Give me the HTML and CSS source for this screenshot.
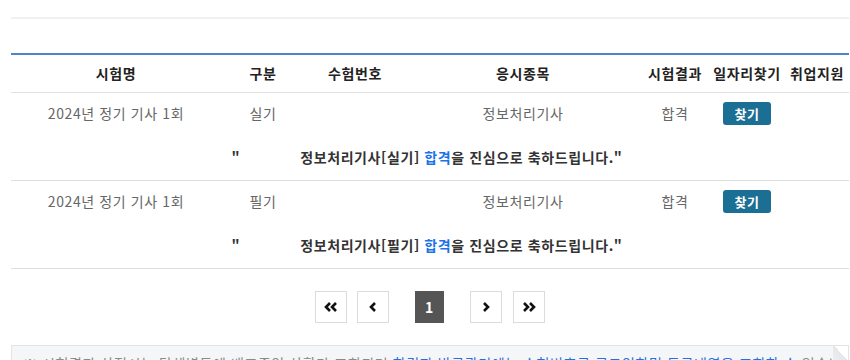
FILE: index.html
```html
<!DOCTYPE html>
<html lang="ko">
<head>
    <meta charset="UTF-8">
    <meta name="viewport" content="width=device-width, initial-scale=1.0">
    <title>합격자 발표 조회</title>
    <link rel="stylesheet" href="styles.css">
</head>
<body>

<div class="wrap">
    <!-- 상단 구분선 -->
    <div class="top-line"></div>

    <!-- 합격자 조회 결과 -->
    <table class="result-table">
        <colgroup>
            <col class="c-name">
            <col class="c-type">
            <col class="c-no">
            <col class="c-subject">
            <col class="c-result">
            <col class="c-job">
            <col class="c-support">
        </colgroup>
        <thead>
            <tr>
                <th>시험명</th>
                <th>구분</th>
                <th>수험번호</th>
                <th>응시종목</th>
                <th>시험결과</th>
                <th>일자리찾기</th>
                <th>취업지원</th>
            </tr>
        </thead>
        <tbody>
            <tr class="data-row">
                <td>2024년 정기 기사 1회</td>
                <td>실기</td>
                <td></td>
                <td>정보처리기사</td>
                <td>합격</td>
                <td><button class="btn-find">찾기</button></td>
                <td></td>
            </tr>
            <tr class="msg-row">
                <td colspan="7">
                    <span class="msg"><span class="q">"</span>정보처리기사[실기] <em>합격</em>을 진심으로 축하드립니다."</span>
                </td>
            </tr>
            <tr class="data-row">
                <td>2024년 정기 기사 1회</td>
                <td>필기</td>
                <td></td>
                <td>정보처리기사</td>
                <td>합격</td>
                <td><button class="btn-find">찾기</button></td>
                <td></td>
            </tr>
            <tr class="msg-row">
                <td colspan="7">
                    <span class="msg"><span class="q">"</span>정보처리기사[필기] <em>합격</em>을 진심으로 축하드립니다."</span>
                </td>
            </tr>
        </tbody>
    </table>

    <!-- 페이지 이동 -->
    <div class="paging">
        <a class="pg first" href="#"><svg width="14" height="10" viewBox="0 0 14 10"><polyline points="6,1 2,5 6,9" /><polyline points="12,1 8,5 12,9" /></svg></a>
        <a class="pg prev" href="#"><svg width="8" height="10" viewBox="0 0 8 10"><polyline points="6,1 2,5 6,9" /></svg></a>
        <a class="pg num on" href="#">1</a>
        <a class="pg next" href="#"><svg width="8" height="10" viewBox="0 0 8 10"><polyline points="2,1 6,5 2,9" /></svg></a>
        <a class="pg last" href="#"><svg width="14" height="10" viewBox="0 0 14 10"><polyline points="2,1 6,5 2,9" /><polyline points="8,1 12,5 8,9" /></svg></a>
    </div>

    <!-- 안내 문구 -->
    <div class="notice">
        <p>※ 시험결과 산정시는 단체별도에 배포중인 상황만 조회되며 <span class="blue">합격자 발급관리에는 수험번호로 로그인하면 등록내역을 조회할 수</span> 있습니다.</p>
    </div>
</div>

</body>
</html>
```

FILE: styles.css
```css
* {
    margin: 0;
    padding: 0;
    box-sizing: border-box;
}

body {
    font-family: "Noto Sans CJK KR", "Noto Sans", sans-serif;
    font-size: 14px;
    letter-spacing: 0.6px;
    color: #333;
    background: #fff;
    overflow: hidden;
}

.wrap {
    width: 838px;
    margin-left: 11px;
    padding-top: 17px;
}

.top-line {
    height: 2px;
    background-color: #f1f1f1;
    margin-bottom: 34px;
}

.result-table {
    width: 100%;
    table-layout: fixed;
    border-collapse: collapse;
    border-top: 2px solid #4a86c8;
}

.c-name { width: 210px; }
.c-type { width: 84px; }
.c-no { width: 100px; }
.c-subject { width: 236px; }
.c-result { width: 68px; }
.c-job { width: 76px; }
.c-support { width: 64px; }

.result-table th {
    height: 38px;
    font-weight: bold;
    color: #222;
    text-align: center;
    white-space: nowrap;
    border-bottom: 1px solid #e2e2e2;
}

.result-table td {
    text-align: center;
    white-space: nowrap;
    color: #666;
}

.data-row td {
    height: 42px;
}

.msg-row td {
    height: 46px;
    padding-top: 1px;
    border-bottom: 1px solid #dedede;
}

.msg {
    font-weight: bold;
    color: #333;
    padding-right: 6px;
}

.msg .q {
    margin-right: 60px;
}

.msg em {
    font-style: normal;
    color: #1a73e8;
}

.btn-find {
    width: 48px;
    height: 23px;
    border: none;
    border-radius: 3px;
    background-color: #1b6e94;
    color: #fff;
    font-family: inherit;
    font-size: 13px;
    font-weight: bold;
    letter-spacing: 0.6px;
    vertical-align: middle;
    cursor: pointer;
}

.paging {
    display: flex;
    justify-content: center;
    align-items: center;
    margin-top: 22px;
}

.pg {
    display: flex;
    justify-content: center;
    align-items: center;
    width: 32px;
    height: 32px;
    border: 1px solid #dcdcdc;
    background: #fff;
    color: #fff;
    text-decoration: none;
}

.pg svg polyline {
    fill: none;
    stroke: #111;
    stroke-width: 2.6;
}

.pg.prev { margin-left: 10px; }
.pg.next { margin-left: 26px; }
.pg.last { margin-left: 11px; }

.pg.num {
    width: 29px;
    margin-left: 26px;
    border-color: #555;
    background-color: #555;
    font-weight: bold;
    font-size: 14px;
}

.notice {
    position: relative;
    margin-top: 22px;
    padding: 7px 11px;
    background-color: #f5f6f8;
    border: 1px solid #e2e4e7;
    color: #8a8a8a;
    font-size: 14px;
    white-space: nowrap;
    overflow: hidden;
}

.notice .blue {
    color: #1a73e8;
}

.notice::after {
    content: "";
    position: absolute;
    top: -1px;
    right: -1px;
    width: 16px;
    height: 16px;
    background: linear-gradient(225deg, #fff 50%, #e4e6e9 50%, #eceef1 100%);
}
```
